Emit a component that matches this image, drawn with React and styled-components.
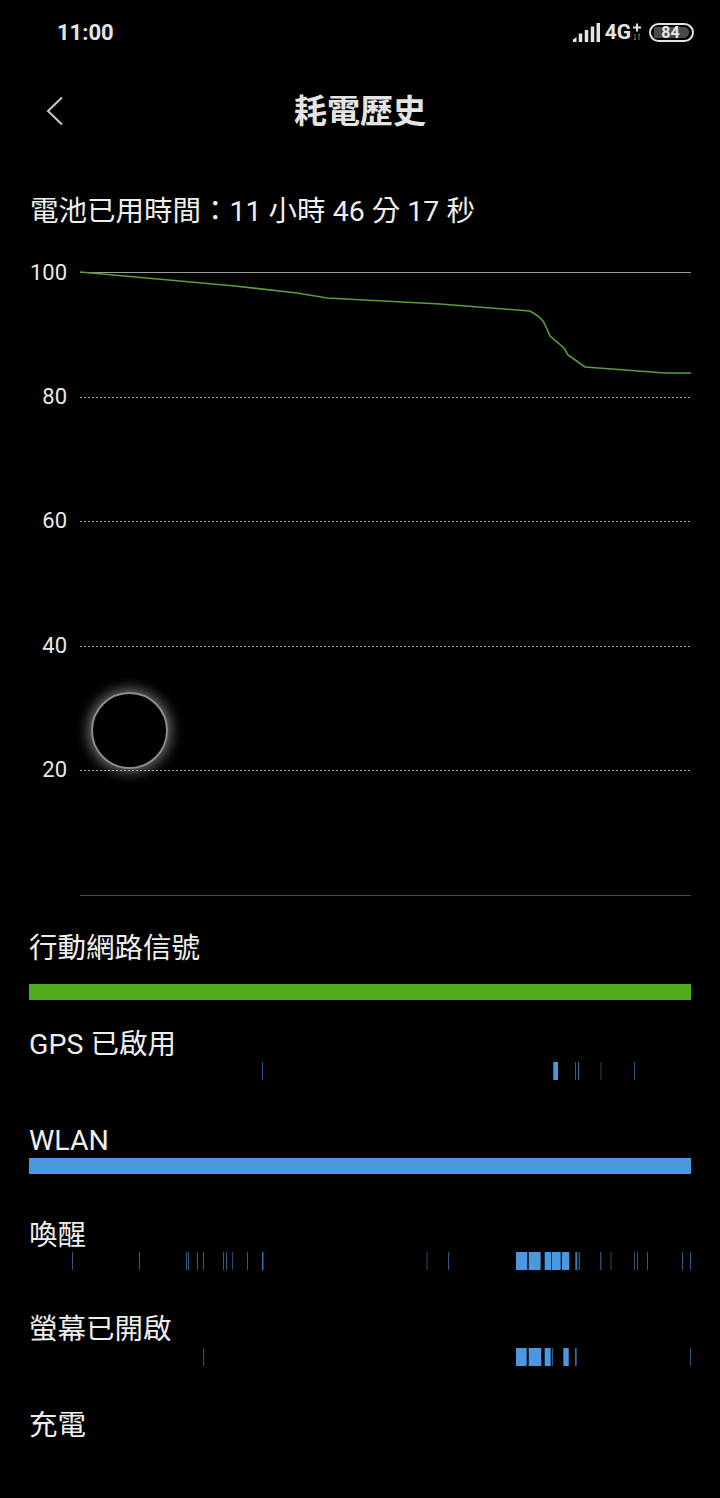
import React from "react";
import styled, { createGlobalStyle } from "styled-components";

const GlobalStyle = createGlobalStyle`
  html, body {
    margin: 0;
    padding: 0;
    background: #000;
  }
  body {
    font-family: Roboto, "Noto Sans CJK TC", sans-serif;
  }
`;

const Page = styled.div`
  position: relative;
  width: 720px;
  height: 1498px;
  overflow: hidden;
  background: #000;
  color: #e8e8e8;
`;

const StatusBar = styled.div`
  display: flex;
  align-items: center;
  justify-content: space-between;
  height: 64px;
  padding: 0 26px 0 57px;
`;

const Clock = styled.div`
  font-size: 22px;
  font-weight: 700;
  color: #e4e4e4;
`;

const StatusIcons = styled.div`
  display: flex;
  align-items: center;
`;

const NetworkType = styled.div`
  margin-left: 5px;
  font-size: 21px;
  font-weight: 700;
  line-height: 24px;
  color: #e4e4e4;
`;

const DataIcon = styled.svg`
  display: block;
  margin: 0 8px 0 2px;
`;

const Battery = styled.div`
  box-sizing: border-box;
  display: flex;
  width: 45px;
  height: 19px;
  padding: 2px 3px;
  border: 2px solid #e4e4e4;
  border-radius: 10px;
`;

const BatteryFill = styled.div`
  flex: 1;
  display: flex;
  align-items: center;
  justify-content: center;
  padding-right: 2px;
  background: #4a4a4a;
  border-radius: 1px 5px 5px 1px;
  font-size: 16px;
  font-weight: 700;
  color: #e8e8e8;
`;

const Header = styled.div`
  position: relative;
  display: flex;
  align-items: center;
  justify-content: center;
  height: 94px;
`;

const BackIcon = styled.svg`
  position: absolute;
  left: 46px;
  top: 32px;
`;

const Title = styled.h1`
  margin: 0 0 4px;
  font-size: 33px;
  font-weight: 700;
  color: #e4e4e4;
`;

const Elapsed = styled.div`
  box-sizing: border-box;
  height: 74px;
  padding: 35px 0 0 30px;
  font-size: 28.5px;
  line-height: 38px;
  color: #eee;
`;

const ChartWrap = styled.div`
  position: relative;
  height: 697px;
`;

const Chart = styled.svg`
  display: block;
`;

const AxisLabel = styled.text`
  font-family: Roboto, sans-serif;
  font-size: 22px;
  fill: #e8e8e8;
`;

const TouchRing = styled.div`
  position: absolute;
  left: 91px;
  top: 460px;
  box-sizing: border-box;
  width: 77px;
  height: 77px;
  border: 2px solid #8c8c8c;
  border-radius: 50%;
  background: #000;
  box-shadow: 0 0 13px 3px rgba(160, 160, 160, 0.7);
`;

const Rows = styled.div`
  display: flex;
  flex-direction: column;
`;

const Row = styled.div`
  box-sizing: border-box;
  height: ${props => props.$height}px;
  padding: 0 29px;
`;

const RowLabel = styled.div`
  box-sizing: border-box;
  height: ${props => props.$height}px;
  padding-top: 1px;
  font-size: 28.5px;
  line-height: 38px;
  color: #eee;
`;

const Bar = styled.div`
  width: 662px;
  height: 16px;
  background: ${props => props.$color};
`;

const Track = styled.svg`
  display: block;
  margin-left: -29px;
`;

const CHART_TOP = 232;

const gridLines = [
  { y: 397, label: "80" },
  { y: 521, label: "60" },
  { y: 646, label: "40" },
  { y: 770, label: "20" },
];

const batteryLine = [
  [80, 272], [235, 286], [297, 293], [327, 298], [440, 304], [530, 311],
  [538, 316], [543, 321], [547, 329], [550, 336], [564, 348], [568, 355],
  [585, 367], [665, 373], [691, 373],
]
  .map(([x, y]) => `${x},${y - CHART_TOP}`)
  .join(" ");

// [start, end, opacity]
const gpsTicks = [
  [262, 263, 0.55], [553.3, 558, 1], [575, 576, 0.6], [578, 579, 0.7],
  [600.5, 601.5, 0.45], [634, 635, 0.55],
];

const wakeTicks = [
  [72, 73, 0.6], [139, 140, 0.6], [186, 187, 0.6], [188, 189, 0.6],
  [197, 198, 0.6], [203, 204, 0.6], [223, 224, 0.6], [226, 227, 0.6],
  [232, 233, 0.5], [247, 248, 0.6], [262, 263.5, 0.75], [426.5, 427.5, 0.5],
  [448, 449, 0.6], [516, 527.3, 1], [528.7, 540.7, 1], [544.7, 551.3, 1],
  [552, 560.7, 1], [562, 569.3, 1], [575.3, 577.3, 0.8], [578.7, 579.7, 0.8],
  [600, 601.5, 0.5], [610.5, 611.5, 0.5], [634, 635, 0.55], [637, 638, 0.55],
  [647, 648, 0.6], [682, 683, 0.6], [690, 691, 0.6],
];

const screenTicks = [
  [203, 204, 0.55], [516, 526.7, 1], [528.7, 541.3, 1], [544.7, 550.7, 1],
  [552, 553, 0.6], [563.3, 568.7, 1], [575, 576.7, 0.7], [690, 691, 0.55],
];

const TickTrack = ({ ticks, height = 18 }) => (
  <Track width="720" height={height}>
    {ticks.map(([start, end, opacity]) => (
      <rect
        key={start}
        x={start}
        y="0"
        width={end - start}
        height={height}
        fill="#4c98e0"
        opacity={opacity}
      />
    ))}
  </Track>
);

export default function App() {
  return (
    <Page>
      <GlobalStyle />
      <StatusBar>
        <Clock>11:00</Clock>
        <StatusIcons>
          <svg width="27" height="19" viewBox="0 0 27 19">
            <path d="M0 19v-2.5L3.5 14v5z" fill="#e4e4e4" />
            <rect x="5.75" y="10.5" width="3.5" height="8.5" fill="#e4e4e4" />
            <rect x="11.75" y="7" width="3.5" height="12" fill="#e4e4e4" />
            <rect x="17.75" y="3.5" width="3.5" height="15.5" fill="#e4e4e4" />
            <rect x="23.5" y="0" width="3.5" height="19" fill="#e4e4e4" />
          </svg>
          <NetworkType>4G</NetworkType>
          <DataIcon width="8" height="18" viewBox="0 0 8 18">
            <path d="M0 4.5h8M4 0.5v8" stroke="#e4e4e4" strokeWidth="2" fill="none" />
            <path d="M2 11v6M0.8 15.8L2 17l1.2-1.2M6 17v-6M4.8 12.2L6 11l1.2 1.2" stroke="#777" strokeWidth="1" fill="none" />
          </DataIcon>
          <Battery>
            <BatteryFill>84</BatteryFill>
          </Battery>
        </StatusIcons>
      </StatusBar>
      <Header>
        <BackIcon width="18" height="30" viewBox="0 0 18 30">
          <path d="M16 1.5L2 15l14 13.5" stroke="#c8c8c8" strokeWidth="2" fill="none" />
        </BackIcon>
        <Title>耗電歷史</Title>
      </Header>
      <Elapsed>電池已用時間：11 小時 46 分 17 秒</Elapsed>
      <ChartWrap>
        <Chart width="720" height="697" viewBox="0 0 720 697">
          <line x1="80" x2="691" y1={272.5 - CHART_TOP} y2={272.5 - CHART_TOP} stroke="#9a9a9a" strokeWidth="1" />
          <AxisLabel x="67" y={280 - CHART_TOP} textAnchor="end">100</AxisLabel>
          {gridLines.map(({ y, label }) => (
            <g key={label}>
              <line
                x1="80"
                x2="691"
                y1={y - CHART_TOP + 0.5}
                y2={y - CHART_TOP + 0.5}
                stroke="#a8a8a8"
                strokeWidth="1"
                strokeDasharray="2 2"
              />
              <AxisLabel x="67" y={y - CHART_TOP + 7} textAnchor="end">{label}</AxisLabel>
            </g>
          ))}
          <line x1="80" x2="691" y1={895.5 - CHART_TOP} y2={895.5 - CHART_TOP} stroke="#4a4a4a" strokeWidth="1" />
          <polyline points={batteryLine} fill="none" stroke="#5a9e3c" strokeWidth="1.6" />
        </Chart>
        <TouchRing />
      </ChartWrap>
      <Rows>
        <Row $height={96}>
          <RowLabel $height={55}>行動網路信號</RowLabel>
          <Bar $color="#52ad1c" />
        </Row>
        <Row $height={96}>
          <RowLabel $height={37}>GPS 已啟用</RowLabel>
          <TickTrack ticks={gpsTicks} />
        </Row>
        <Row $height={95}>
          <RowLabel $height={37}>WLAN</RowLabel>
          <Bar $color="#4a98e0" />
        </Row>
        <Row $height={94}>
          <RowLabel $height={36}>喚醒</RowLabel>
          <TickTrack ticks={wakeTicks} />
        </Row>
        <Row $height={96}>
          <RowLabel $height={38}>螢幕已開啟</RowLabel>
          <TickTrack ticks={screenTicks} />
        </Row>
        <Row $height={92}>
          <RowLabel $height={38}>充電</RowLabel>
        </Row>
      </Rows>
    </Page>
  );
}
